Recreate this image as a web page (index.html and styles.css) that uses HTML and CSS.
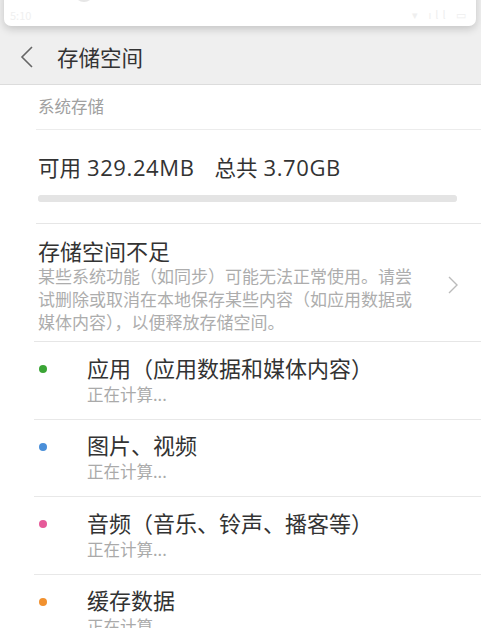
FILE: index.html
```html
<!DOCTYPE html>
<html lang="zh-CN">
<head>
<meta charset="utf-8">
<link rel="stylesheet" href="styles.css">
</head>
<body>
<div class="screen">
  <div class="shade">
    <div class="shade-knob"></div>
    <span class="shade-time">5:10</span>
    <span class="shade-icons">▾ ıll ▭</span>
  </div>
  <header class="header">
    <svg class="back" width="14" height="22" viewBox="0 0 14 22"><path d="M12 1 L2 11 L12 21" fill="none" stroke="#666" stroke-width="1.6"/></svg>
    <h1 class="title">存储空间</h1>
  </header>
  <main class="content">
    <div class="section-label">系统存储</div>
    <div class="summary">
      <div class="summary-text">可用<span class="num">329.24MB</span><span class="gap"></span>总共<span class="num">3.70GB</span></div>
      <div class="bar"><div class="bar-fill" style="width:100%"></div></div>
    </div>
    <div class="warn">
      <div class="warn-body">
        <div class="warn-title">存储空间不足</div>
        <div class="warn-desc">某些系统功能（如同步）可能无法正常使用。请尝试删除或取消在本地保存某些内容（如应用数据或媒体内容），以便释放存储空间。</div>
      </div>
      <svg class="chev" width="12" height="20" viewBox="0 0 12 20"><path d="M2 2 L10 10 L2 18" fill="none" stroke="#bbb" stroke-width="1.4"/></svg>
    </div>
    <div class="item">
      <span class="dot green"></span>
      <div class="item-body"><div class="item-title">应用（应用数据和媒体内容）</div><div class="item-sub">正在计算...</div></div>
    </div>
    <div class="item">
      <span class="dot blue"></span>
      <div class="item-body"><div class="item-title">图片、视频</div><div class="item-sub">正在计算...</div></div>
    </div>
    <div class="item">
      <span class="dot pink"></span>
      <div class="item-body"><div class="item-title">音频（音乐、铃声、播客等）</div><div class="item-sub">正在计算...</div></div>
    </div>
    <div class="item">
      <span class="dot orange"></span>
      <div class="item-body"><div class="item-title">缓存数据</div><div class="item-sub">正在计算...</div></div>
    </div>
  </main>
</div>
</body>
</html>
```
FILE: styles.css
```css
* { box-sizing: border-box; margin: 0; padding: 0; }
html, body { width: 481px; height: 628px; overflow: hidden; background: #fff; }
body { font-family: "Noto Sans CJK SC", "Noto Sans", sans-serif; color: #333; }
.screen { position: relative; width: 481px; height: 628px; overflow: hidden; }
.shade {
  position: absolute; left: 4px; right: 5px; top: -10px; height: 36px;
  background: #fff; border-radius: 0 0 7px 7px;
  box-shadow: 0 3px 8px rgba(0,0,0,0.18);
  z-index: 2;
}
.shade-knob { position: absolute; left: 70px; top: 0; width: 20px; height: 12px; border-radius: 0 0 10px 10px; background: #e6e6e6; }
.shade-time { position: absolute; left: 6px; top: 17px; font-size: 11px; color: #f0f0f0; }
.shade-icons { position: absolute; right: 6px; top: 16px; font-size: 11px; color: #efefef; letter-spacing: 4px; }
.header {
  height: 85px; padding-top: 30px; background: #efefef;
  border-bottom: 1px solid #dcdcdc;
  display: flex; align-items: center;
}
.back { margin-left: 20px; margin-right: 23px; }
.title { font-size: 21.5px; font-weight: 400; color: #333; line-height: 1; }
.content { padding-left: 38px; }
.section-label { height: 45px; line-height: 43px; font-size: 16.5px; color: #a0a0a0; border-bottom: 1px solid #ececec; margin-left: -2px; padding-left: 2px; }
.summary { height: 94px; border-bottom: 1px solid #e6e6e6; margin-left: -2px; padding-left: 2px; padding-top: 23px; }
.summary-text { font-size: 21.5px; line-height: 28px; color: #333; display: flex; align-items: baseline; }
.num { font-family: "Open Sans", "Noto Sans", sans-serif; font-size: 22px; letter-spacing: 0.6px; margin-left: 6px; }
.gap { width: 20px; }
.bar { margin-top: 14px; width: 419px; height: 7px; border-radius: 4px; background: #e6e6e6; }
.bar-fill { height: 100%; border-radius: 4px; background: #e4e4e4; }
.warn { height: 118px; border-bottom: 1px solid #e6e6e6; display: flex; align-items: center; margin-left: -4px; padding-left: 4px; }
.warn-body { width: 390px; padding-top: 3px; }
.warn-title { font-size: 22px; line-height: 28px; color: #333; }
.warn-desc { font-size: 17px; line-height: 23px; color: #adadad; }
.chev { margin-left: 19px; margin-top: 4px; }
.item { height: 77.5px; border-bottom: 1px solid #e8e8e8; display: flex; align-items: center; position: relative; margin-left: -4px; padding-left: 4px; }
.dot { width: 8px; height: 8px; border-radius: 50%; margin-left: 1px; margin-right: 40px; margin-top: -22px; }
.green { background: #3aa535; }
.blue { background: #4a8fd9; }
.pink { background: #e65a99; }
.orange { background: #f1912f; }
.item-body { padding-bottom: 1px; }
.item-title { font-size: 22px; line-height: 28px; color: #333; }
.item-sub { font-size: 16.5px; line-height: 26px; color: #aaaaaa; }
```
